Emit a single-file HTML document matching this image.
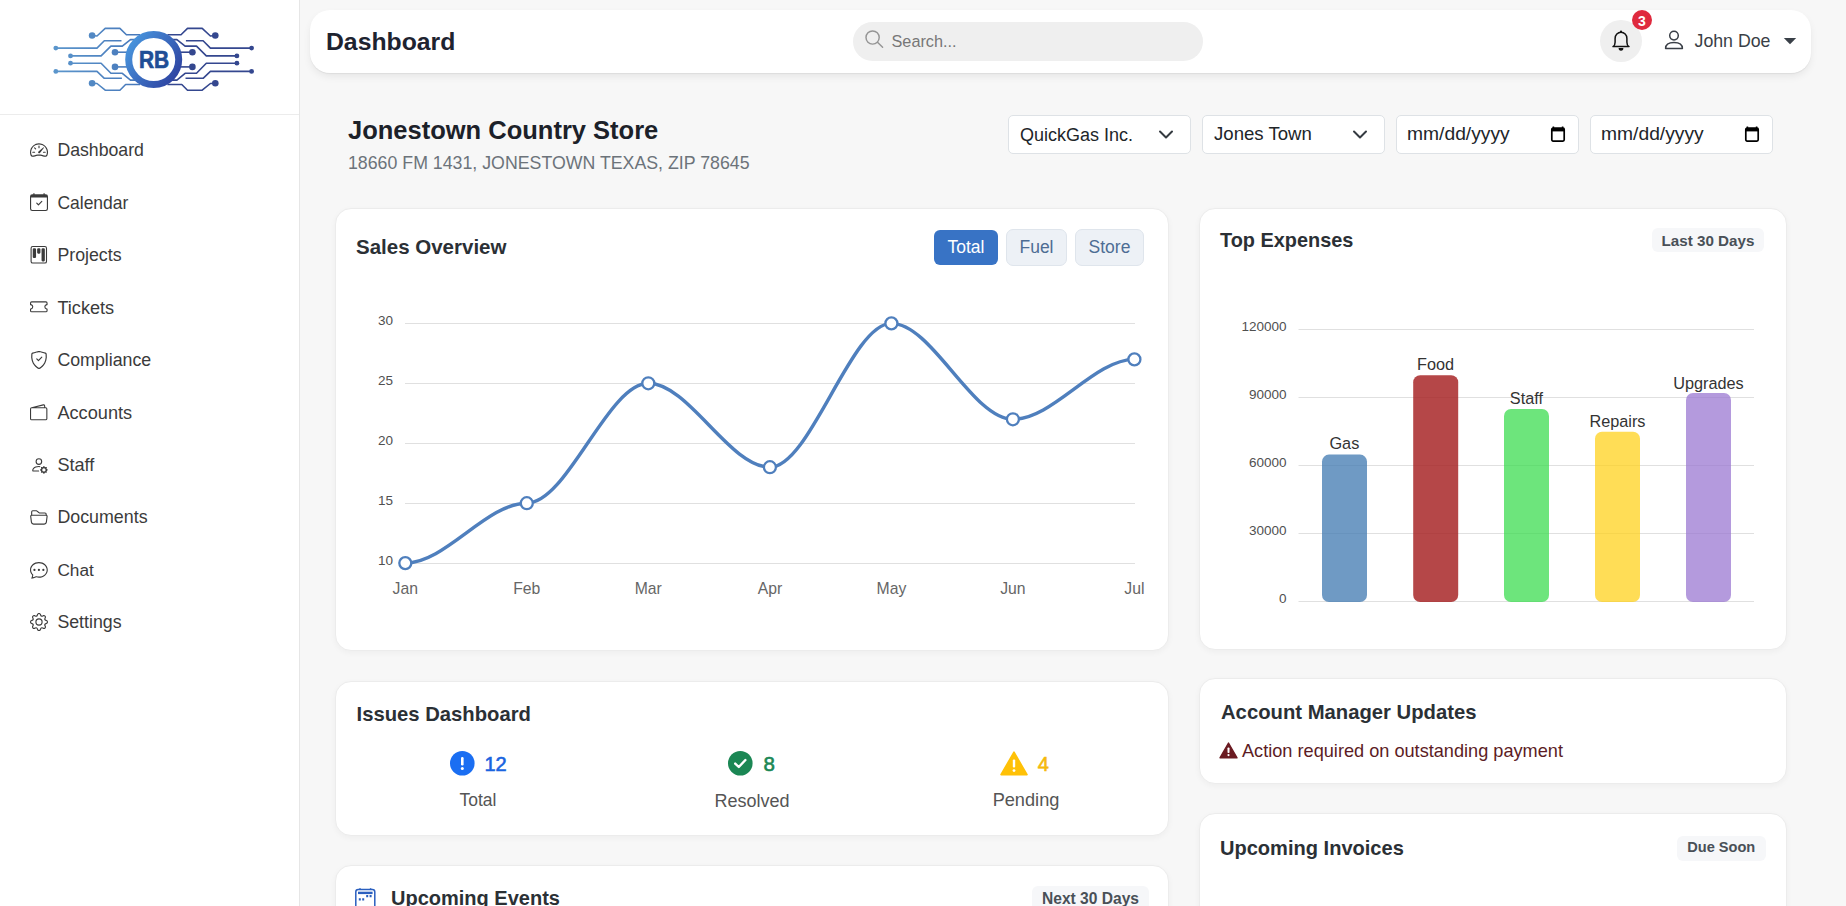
<!DOCTYPE html>
<html><head><meta charset="utf-8">
<style>
*{box-sizing:border-box;margin:0;padding:0}
html,body{width:1846px;height:906px;overflow:hidden}
body{background:#f7f7f7;font-family:"Liberation Sans",sans-serif;position:relative;color:#212529}
.abs{position:absolute}
.t{position:absolute;white-space:nowrap;line-height:1}
#side{position:absolute;left:0;top:0;width:300px;height:906px;background:#fff;border-right:1px solid #e6e6e6}
#side .div{position:absolute;left:0;top:114px;width:299px;height:1px;background:#ececec}
.nav{position:absolute;left:57.4px;font-size:17.5px;color:#3b3b3b}
.nic{position:absolute;left:30px;width:18px;height:18px;overflow:visible}
.card{position:absolute;background:#fff;border:1px solid #ececec;border-radius:16px;box-shadow:0 2px 6px rgba(0,0,0,0.04)}
.h{font-weight:bold;color:#2b3035}
.sel{position:absolute;top:115px;height:38.5px;background:#fff;border:1px solid #dee2e6;border-radius:5px}
.badge{position:absolute;background:#f6f7f9;border-radius:6px}
</style></head><body>

<div id="side">
  <svg class="abs" style="left:0;top:0" width="300" height="114" viewBox="0 0 300 114">
    <defs>
      <linearGradient id="lg" gradientUnits="userSpaceOnUse" x1="53" y1="0" x2="255" y2="0">
        <stop offset="0" stop-color="#5b96cc"/>
        <stop offset="0.45" stop-color="#4676b9"/>
        <stop offset="1" stop-color="#2e3e8c"/>
      </linearGradient>
      <linearGradient id="cg" gradientUnits="userSpaceOnUse" x1="125" y1="40" x2="182" y2="80">
        <stop offset="0" stop-color="#4a9be2"/>
        <stop offset="1" stop-color="#2c3c9c"/>
      </linearGradient>
      <g id="half" fill="none" stroke-width="1.6" stroke-linejoin="round">
        <path d="M92.1,35.5 L97,36 L105.2,28.4 L119.9,28.4 L126.4,34.7 L140,34.7"/>
        <path d="M55.8,48.1 L97,48.1 L104.3,40.8 L121.5,40.8"/>
        <path d="M70.5,55.9 L101.1,55.9 L110.9,46.1 L122.3,46.1 L130.5,39.6 L136,39.6"/>
        <path d="M115,52.2 L130,52.2"/>
        <path d="M115,66.9 L130,66.9"/>
        <path d="M70.5,63.2 L101.1,63.2 L110.9,73.3 L122.3,73.3 L130.5,80.1 L136,80.1"/>
        <path d="M55.8,71.4 L97,71.4 L104.3,78.3 L121.9,78.3"/>
        <path d="M92.1,83.2 L97,83.5 L105.2,90.2 L119.9,90.2 L125.6,84.5 L140,84.5"/>
      </g>
      <g id="dots">
        <circle cx="92.1" cy="35.5" r="3.3"/><circle cx="55.8" cy="48.1" r="2.4"/>
        <circle cx="70.5" cy="55.9" r="2.4"/><circle cx="115" cy="52.2" r="3.3"/>
        <circle cx="115" cy="66.9" r="3.3"/><circle cx="70.5" cy="63.2" r="2.4"/>
        <circle cx="55.8" cy="71.4" r="2.4"/><circle cx="92.1" cy="83.2" r="3.3"/>
      </g>
    </defs>
    <g stroke="url(#lg)" fill="url(#lg)">
      <use href="#half"/>
      <use href="#dots" stroke="none"/>
      <g transform="translate(307.4,0) scale(-1,1)"><g stroke="#34478f" fill="#34478f"><use href="#half"/><use href="#dots" stroke="none"/></g></g>
    </g>
    <circle cx="153.7" cy="59.6" r="25" fill="#fff" stroke="url(#cg)" stroke-width="7"/>
    <text x="154" y="68.3" text-anchor="middle" font-family="Liberation Sans" font-weight="bold" font-size="23.5" fill="#1f4e96" stroke="#1f4e96" stroke-width="0.7" textLength="30.2" lengthAdjust="spacingAndGlyphs">RB</text>
  </svg>
  <div class="div"></div>

  <!-- nav icons -->
<svg class="abs" style="left:30px;top:140.75px" width="18" height="18" viewBox="0 0 16 16" fill="#3b3b3b"><path d="M8 4a.5.5 0 0 1 .5.5V6a.5.5 0 0 1-1 0V4.5A.5.5 0 0 1 8 4M3.732 5.732a.5.5 0 0 1 .707 0l.915.914a.5.5 0 1 1-.708.708l-.914-.915a.5.5 0 0 1 0-.707M2 10a.5.5 0 0 1 .5-.5h1.586a.5.5 0 0 1 0 1H2.5A.5.5 0 0 1 2 10m9.5 0a.5.5 0 0 1 .5-.5h1.5a.5.5 0 0 1 0 1H12a.5.5 0 0 1-.5-.5m.754-4.246a.39.39 0 0 0-.527-.02L7.547 9.31a.91.91 0 1 0 1.302 1.258l3.434-4.297a.39.39 0 0 0-.029-.518z"/><path fill-rule="evenodd" d="M0 10a8 8 0 1 1 15.547 2.661c-.442 1.253-1.845 1.602-2.932 1.25C11.309 13.488 9.475 13 8 13c-1.474 0-3.31.488-4.615.911-1.087.352-2.49.003-2.932-1.25A8 8 0 0 1 0 10m8-7a7 7 0 0 0-6.603 9.329c.203.575.923.876 1.68.63C4.397 12.533 6.358 12 8 12s3.604.532 4.923.96c.757.245 1.477-.056 1.68-.631A7 7 0 0 0 8 3"/></svg>
  <div class="t nav" style="top:141.84px;font-size:17.69px">Dashboard</div>
<svg class="abs" style="left:30px;top:193px" width="18" height="18" viewBox="0 0 16 16" fill="#3b3b3b"><path d="M10.854 7.146a.5.5 0 0 1 0 .708l-3 3a.5.5 0 0 1-.708 0l-1.5-1.5a.5.5 0 1 1 .708-.708L7.5 9.793l2.646-2.647a.5.5 0 0 1 .708 0"/><path d="M3.5 0a.5.5 0 0 1 .5.5V1h8V.5a.5.5 0 0 1 1 0V1h1a2 2 0 0 1 2 2v11a2 2 0 0 1-2 2H2a2 2 0 0 1-2-2V3a2 2 0 0 1 2-2h1V.5a.5.5 0 0 1 .5-.5M1 4v10a1 1 0 0 0 1 1h12a1 1 0 0 0 1-1V4z"/></svg>
  <div class="t nav" style="top:194.51px;font-size:17.49px">Calendar</div>
<svg class="abs" style="left:30px;top:246px" width="17.6" height="17.6" viewBox="0 0 16 16" fill="#3b3b3b"><path d="M13.5 1a1 1 0 0 1 1 1v12a1 1 0 0 1-1 1h-11a1 1 0 0 1-1-1V2a1 1 0 0 1 1-1zm-11-1a2 2 0 0 0-2 2v12a2 2 0 0 0 2 2h11a2 2 0 0 0 2-2V2a2 2 0 0 0-2-2z"/><path d="M6.5 3a1 1 0 0 1 1-1h1a1 1 0 0 1 1 1v3a1 1 0 0 1-1 1h-1a1 1 0 0 1-1-1zm-4 0a1 1 0 0 1 1-1h1a1 1 0 0 1 1 1v7a1 1 0 0 1-1 1h-1a1 1 0 0 1-1-1zm8 0a1 1 0 0 1 1-1h1a1 1 0 0 1 1 1v10a1 1 0 0 1-1 1h-1a1 1 0 0 1-1-1z"/></svg>
  <div class="t nav" style="top:246.76px;font-size:17.78px">Projects</div>
<svg class="abs" style="left:30.3px;top:298px" width="17.6" height="17.6" viewBox="0 0 16 16" fill="#3b3b3b"><path d="M0 4.5A1.5 1.5 0 0 1 1.5 3h13A1.5 1.5 0 0 1 16 4.5V6a.5.5 0 0 1-.5.5 1.5 1.5 0 0 0 0 3 .5.5 0 0 1 .5.5v1.5a1.5 1.5 0 0 1-1.5 1.5h-13A1.5 1.5 0 0 1 0 11.5V10a.5.5 0 0 1 .5-.5 1.5 1.5 0 1 0 0-3A.5.5 0 0 1 0 6zM1.5 4a.5.5 0 0 0-.5.5v1.05a2.5 2.5 0 0 1 0 4.9v1.05a.5.5 0 0 0 .5.5h13a.5.5 0 0 0 .5-.5v-1.05a2.5 2.5 0 0 1 0-4.9V4.5a.5.5 0 0 0-.5-.5z"/></svg>
  <div class="t nav" style="top:298.95px;font-size:18.15px">Tickets</div>
<svg class="abs" style="left:29.8px;top:351.2px" width="18" height="18" viewBox="0 0 16 16" fill="#3b3b3b"><path d="M5.338 1.59a61 61 0 0 0-2.837.856.48.48 0 0 0-.328.39c-.554 4.157.726 7.19 2.253 9.188a10.7 10.7 0 0 0 2.287 2.233c.346.244.652.42.893.533q.18.085.293.118a1 1 0 0 0 .101.025 1 1 0 0 0 .1-.025q.114-.034.294-.118c.24-.113.547-.29.893-.533a10.7 10.7 0 0 0 2.287-2.233c1.527-1.997 2.807-5.031 2.253-9.188a.48.48 0 0 0-.328-.39c-.651-.213-1.75-.56-2.837-.855C9.552 1.29 8.531 1.067 8 1.067c-.53 0-1.552.223-2.662.524zM5.072.56C6.157.265 7.31 0 8 0s1.843.265 2.928.56c1.11.3 2.229.655 2.887.87a1.54 1.54 0 0 1 1.044 1.262c.596 4.477-.787 7.795-2.465 9.99a11.8 11.8 0 0 1-2.517 2.453 7 7 0 0 1-1.048.625c-.28.132-.581.24-.829.24s-.548-.108-.829-.24a7 7 0 0 1-1.048-.625 11.8 11.8 0 0 1-2.517-2.453C1.928 10.487.545 7.169 1.141 2.692A1.54 1.54 0 0 1 2.185 1.43 63 63 0 0 1 5.072.56"/><path d="M10.854 5.146a.5.5 0 0 1 0 .708l-3 3a.5.5 0 0 1-.708 0l-1.5-1.5a.5.5 0 1 1 .708-.708L7.5 7.793l2.646-2.647a.5.5 0 0 1 .708 0"/></svg>
  <div class="t nav" style="top:351.76px;font-size:17.78px">Compliance</div>
<svg class="abs" style="left:30.3px;top:404px" width="17.4" height="17.4" viewBox="0 0 16 16" fill="#3b3b3b"><path d="M12.136.326A1.5 1.5 0 0 1 14 1.78V3h.5A1.5 1.5 0 0 1 16 4.5v9a1.5 1.5 0 0 1-1.5 1.5h-13A1.5 1.5 0 0 1 0 13.5v-9a1.5 1.5 0 0 1 1.432-1.499zM5.562 3H13V1.78a.5.5 0 0 0-.621-.484zM1.5 4a.5.5 0 0 0-.5.5v9a.5.5 0 0 0 .5.5h13a.5.5 0 0 0 .5-.5v-9a.5.5 0 0 0-.5-.5z"/></svg>
  <div class="t nav" style="top:403.92px;font-size:18.18px">Accounts</div>
<svg class="abs" style="left:29.9px;top:455.8px" width="17.8" height="17.8" viewBox="0 0 16 16" fill="#3b3b3b"><path d="M11 5a3 3 0 1 1-6 0 3 3 0 0 1 6 0M8 7a2 2 0 1 0 0-4 2 2 0 0 0 0 4m.256 7a4.5 4.5 0 0 1-.229-1.004H3c.001-.246.154-.986.832-1.664C4.484 10.68 5.711 10 8 10q.39 0 .74.025c.226-.341.496-.65.804-.918Q8.844 9.002 8 9c-5 0-6 3-6 4s1 1 1 1zm3.63-4.54c.18-.613 1.048-.613 1.229 0l.043.148a.64.64 0 0 0 .921.382l.136-.074c.561-.306 1.175.308.87.869l-.075.136a.64.64 0 0 0 .382.92l.149.045c.612.18.612 1.048 0 1.229l-.15.043a.64.64 0 0 0-.38.921l.074.136c.305.561-.309 1.175-.87.87l-.136-.075a.64.64 0 0 0-.92.382l-.045.149c-.18.612-1.048.612-1.229 0l-.043-.15a.64.64 0 0 0-.921-.38l-.136.074c-.561.305-1.175-.309-.87-.87l.075-.136a.64.64 0 0 0-.382-.92l-.148-.045c-.613-.18-.613-1.048 0-1.229l.148-.043a.64.64 0 0 0 .382-.921l-.074-.136c-.306-.561.308-1.175.869-.87l.136.075a.64.64 0 0 0 .92-.382zM14 12.5a1.5 1.5 0 1 0-3 0 1.5 1.5 0 0 0 3 0"/></svg>
  <div class="t nav" style="top:456.46px;font-size:18.14px">Staff</div>
<svg class="abs" style="left:30px;top:508.2px" width="17.8" height="17.8" viewBox="0 0 16 16" fill="#3b3b3b"><path d="M1 3.5A1.5 1.5 0 0 1 2.5 2h2.764c.958 0 1.76.56 2.311 1.184C7.985 3.648 8.48 4 9 4h4.5A1.5 1.5 0 0 1 15 5.5v.64c.57.265.94.876.856 1.546l-.64 5.124A2.5 2.5 0 0 1 12.733 15H3.266a2.5 2.5 0 0 1-2.481-2.19l-.64-5.124A1.5 1.5 0 0 1 1 6.14zM2 6h12v-.5a.5.5 0 0 0-.5-.5H9c-.964 0-1.71-.629-2.174-1.154C6.374 3.334 5.82 3 5.264 3H2.5a.5.5 0 0 0-.5.5zm-.367 1a.5.5 0 0 0-.496.562l.64 5.124A1.5 1.5 0 0 0 3.266 14h9.468a1.5 1.5 0 0 0 1.489-1.314l.64-5.124A.5.5 0 0 0 14.367 7z"/></svg>
  <div class="t nav" style="top:509.22px;font-size:17.83px">Documents</div>
<svg class="abs" style="left:30px;top:560.9px" width="17.8" height="17.8" viewBox="0 0 16 16" fill="#3b3b3b"><path d="M5 8a1 1 0 1 1-2 0 1 1 0 0 1 2 0m4 0a1 1 0 1 1-2 0 1 1 0 0 1 2 0m3 1a1 1 0 1 0 0-2 1 1 0 0 0 0 2"/><path d="m2.165 15.803.02-.004c1.83-.363 2.948-.842 3.468-1.105A9 9 0 0 0 8 15c4.418 0 8-3.134 8-7s-3.582-7-8-7-8 3.134-8 7c0 1.76.743 3.37 1.97 4.6a10.4 10.4 0 0 1-.524 2.318l-.003.011a11 11 0 0 1-.244.637c-.079.186.074.394.273.362a22 22 0 0 0 .693-.125m.8-3.108a1 1 0 0 0-.287-.801C1.618 10.83 1 9.468 1 8c0-3.192 3.004-6 7-6s7 2.808 7 6-3.004 6-7 6a8 8 0 0 1-2.088-.272 1 1 0 0 0-.711.074c-.387.196-1.24.57-2.634.893a11 11 0 0 0 .398-2"/></svg>
  <div class="t nav" style="top:562.21px;font-size:17.25px">Chat</div>
<svg class="abs" style="left:30px;top:612.5px" width="18" height="18" viewBox="0 0 16 16" fill="#3b3b3b"><path d="M8 4.754a3.246 3.246 0 1 0 0 6.492 3.246 3.246 0 0 0 0-6.492M5.754 8a2.246 2.246 0 1 1 4.492 0 2.246 2.246 0 0 1-4.492 0"/><path d="M9.796 1.343c-.527-1.79-3.065-1.79-3.592 0l-.094.319a.873.873 0 0 1-1.255.52l-.292-.16c-1.64-.892-3.433.902-2.54 2.541l.159.292a.873.873 0 0 1-.52 1.255l-.319.094c-1.79.527-1.79 3.065 0 3.592l.319.094a.873.873 0 0 1 .52 1.255l-.16.292c-.892 1.64.901 3.434 2.541 2.54l.292-.159a.873.873 0 0 1 1.255.52l.094.319c.527 1.79 3.065 1.79 3.592 0l.094-.319a.873.873 0 0 1 1.255-.52l.292.16c1.64.893 3.434-.902 2.54-2.541l-.159-.292a.873.873 0 0 1 .52-1.255l.319-.094c1.79-.527 1.790-3.065 0-3.592l-.319-.094a.873.873 0 0 1-.52-1.255l.16-.292c.893-1.64-.902-3.433-2.541-2.54l-.292.159a.873.873 0 0 1-1.255-.52zm-2.633.283c.246-.835 1.428-.835 1.674 0l.094.319a1.873 1.873 0 0 0 2.693 1.115l.291-.16c.764-.415 1.6.42 1.184 1.185l-.159.292a1.873 1.873 0 0 0 1.116 2.692l.318.094c.835.246.835 1.428 0 1.674l-.319.094a1.873 1.873 0 0 0-1.115 2.693l.16.291c.415.764-.42 1.6-1.185 1.184l-.291-.159a1.873 1.873 0 0 0-2.693 1.116l-.094.318c-.246.835-1.428.835-1.674 0l-.094-.319a1.873 1.873 0 0 0-2.692-1.115l-.292.16c-.764.415-1.6-.42-1.184-1.185l.159-.291A1.873 1.873 0 0 0 1.945 8.93l-.319-.094c-.835-.246-.835-1.428 0-1.674l.319-.094A1.873 1.873 0 0 0 3.06 4.377l-.16-.292c-.415-.764.42-1.6 1.185-1.184l.292.159a1.873 1.873 0 0 0 2.692-1.115z"/></svg>
  <div class="t nav" style="top:614.26px;font-size:17.78px">Settings</div>
</div>

<!-- header -->
<div class="card" style="left:310px;top:10px;width:1501px;height:63px;border:none;border-radius:20px;box-shadow:0 1px 1px rgba(0,0,0,0.05),0 4px 8px -1px rgba(0,0,0,0.08)"></div>
<div class="t" style="left:326px;top:30px;font-size:24.75px;font-weight:bold;color:#1e2330">Dashboard</div>
<div class="abs" style="left:853px;top:22px;width:350px;height:38.5px;border-radius:20px;background:#efefef"></div>
<svg class="abs" style="left:864px;top:29px" width="22" height="22" viewBox="0 0 22 22" fill="none" stroke="#959595" stroke-width="1.45" stroke-linecap="round">
  <circle cx="8.6" cy="8.5" r="6.6"/><path d="M13.5,13.3 L18.6,18.3"/>
</svg>
<div class="t" style="left:891.5px;top:33px;font-size:16.25px;color:#777">Search...</div>

<div class="abs" style="left:1600px;top:20px;width:42px;height:42px;border-radius:50%;background:#efefef"></div>
<svg class="abs" style="left:1611px;top:29px" width="20" height="24" viewBox="0 0 20 24" fill="none" stroke="#111" stroke-width="1.5" stroke-linejoin="round">
  <path d="M2,17.6 H18 Q15.9,16.4 15.9,13.2 V9.4 A5.9,6.1 0 0 0 4.1,9.4 V13.2 Q4.1,16.4 2,17.6Z"/>
  <circle cx="10" cy="2.7" r="1.1" fill="#111" stroke="none"/>
  <path d="M7.6,19.1 H12.4 A2.4,2.6 0 0 1 7.6,19.1Z" fill="#111" stroke="none"/>
</svg>
<div class="abs" style="left:1632px;top:10px;width:20px;height:20px;border-radius:50%;background:#df2a3e"></div>
<div class="t" style="left:1632px;top:13.5px;width:20px;text-align:center;font-size:14px;font-weight:bold;color:#fff">3</div>
<svg class="abs" style="left:1664px;top:30px" width="20" height="20" viewBox="0 0 20 20" fill="none" stroke="#3a3f47" stroke-width="1.5">
  <circle cx="10" cy="5.6" r="4.3"/>
  <path d="M1.6,18.4 Q1.6,12.4 10,12.4 Q18.4,12.4 18.4,18.4Z" stroke-linejoin="round"/>
</svg>
<div class="t" style="left:1694.5px;top:33px;font-size:17.75px;color:#3a3f47">John Doe</div>
<svg class="abs" style="left:1783px;top:37px" width="14" height="8" viewBox="0 0 14 8"><path d="M0.8,1 H13.2 L7,7.2Z" fill="#3a4048"/></svg>

<!-- store header -->
<div class="t" style="left:348px;top:117.5px;font-size:25.5px;font-weight:bold;color:#1c2129">Jonestown Country Store</div>
<div class="t" style="left:348px;top:154.5px;font-size:17.75px;color:#6c737a">18660 FM 1431, JONESTOWN TEXAS, ZIP 78645</div>

<div class="sel" style="left:1007.8px;width:183px"></div>
<div class="t" style="left:1020px;top:125.5px;font-size:18px;color:#212529">QuickGas Inc.</div>
<svg class="abs" style="left:1158px;top:129px" width="16" height="11" viewBox="0 0 16 11" fill="none" stroke="#343a40" stroke-width="2" stroke-linecap="round" stroke-linejoin="round"><path d="M2,2.5 L8,8.5 L14,2.5"/></svg>
<div class="sel" style="left:1201.8px;width:183px"></div>
<div class="t" style="left:1214px;top:125px;font-size:18.6px;color:#212529">Jones Town</div>
<svg class="abs" style="left:1352px;top:129px" width="16" height="11" viewBox="0 0 16 11" fill="none" stroke="#343a40" stroke-width="2" stroke-linecap="round" stroke-linejoin="round"><path d="M2,2.5 L8,8.5 L14,2.5"/></svg>
<div class="sel" style="left:1395.8px;width:183px"></div>
<div class="t" style="left:1407px;top:124.2px;font-size:19.25px;color:#212529">mm/dd/yyyy</div>
<svg class="abs" style="left:1549.5px;top:126.3px" width="16" height="17" viewBox="0 0 16 17"><path d="M3.4,0.6 V2.4 M12.6,0.6 V2.4" stroke="#000" stroke-width="1.6"/><rect x="1.8" y="2.1" width="12.4" height="13" rx="1.3" fill="none" stroke="#000" stroke-width="1.7"/><rect x="1.8" y="2.1" width="12.4" height="3.3" fill="#000"/></svg>
<div class="sel" style="left:1589.8px;width:183px"></div>
<div class="t" style="left:1601px;top:124.2px;font-size:19.25px;color:#212529">mm/dd/yyyy</div>
<svg class="abs" style="left:1743.5px;top:126.3px" width="16" height="17" viewBox="0 0 16 17"><path d="M3.4,0.6 V2.4 M12.6,0.6 V2.4" stroke="#000" stroke-width="1.6"/><rect x="1.8" y="2.1" width="12.4" height="13" rx="1.3" fill="none" stroke="#000" stroke-width="1.7"/><rect x="1.8" y="2.1" width="12.4" height="3.3" fill="#000"/></svg>

<!-- Sales overview -->
<div class="card" style="left:334.5px;top:207.5px;width:834px;height:443px"></div>
<div class="t h" style="left:356px;top:237px;font-size:20.5px">Sales Overview</div>
<div class="abs" style="left:934px;top:230px;width:64px;height:35px;border-radius:6px;background:#3873c5"></div>
<div class="t" style="left:934px;top:238.5px;width:64px;text-align:center;font-size:17.5px;color:#fff">Total</div>
<div class="abs" style="left:1006px;top:229px;width:61px;height:37px;border-radius:7px;background:#edf1f6;border:1px solid #dfe5ec"></div>
<div class="t" style="left:1006px;top:238.5px;width:61px;text-align:center;font-size:17.5px;color:#4d6d94">Fuel</div>
<div class="abs" style="left:1075px;top:229px;width:69px;height:37px;border-radius:7px;background:#edf1f6;border:1px solid #dfe5ec"></div>
<div class="t" style="left:1075px;top:238.5px;width:69px;text-align:center;font-size:17.5px;color:#4d6d94">Store</div>

<svg class="abs" style="left:0;top:0" width="1846" height="906" viewBox="0 0 1846 906">
  <g stroke="#e0e0e0" stroke-width="1">
    <path d="M405,323.5 H1135 M405,383.5 H1135 M405,443.5 H1135 M405,503.5 H1135 M405,563.5 H1135"/>
  </g>
  <g font-family="Liberation Sans" font-size="13.5" fill="#505050" text-anchor="end">
    <text x="393" y="325">30</text><text x="393" y="385">25</text><text x="393" y="445">20</text><text x="393" y="505">15</text><text x="393" y="565">10</text>
  </g>
  <g font-family="Liberation Sans" font-size="15.75" fill="#666" text-anchor="middle">
    <text x="405.3" y="593.6">Jan</text><text x="526.8" y="593.6">Feb</text><text x="648.3" y="593.6">Mar</text><text x="769.9" y="593.6">Apr</text><text x="891.4" y="593.6">May</text><text x="1012.9" y="593.6">Jun</text><text x="1134.4" y="593.6">Jul</text>
  </g>
  <path d="M405.3,563.1 C445.8,563.1 486.3,503.2 526.8,503.2 C567.3,503.2 607.8,383.3 648.3,383.3 C688.8,383.3 729.4,467.2 769.9,467.2 C810.4,467.2 850.9,323.4 891.4,323.4 C931.9,323.4 972.4,419.3 1012.9,419.3 C1053.4,419.3 1093.9,359.4 1134.4,359.4" fill="none" stroke="#4f7fbd" stroke-width="3.4"/>
  <g fill="#fff" stroke="#4f7fbd" stroke-width="2.3">
    <circle cx="405.3" cy="563.1" r="6"/><circle cx="526.8" cy="503.2" r="6"/><circle cx="648.3" cy="383.3" r="6"/><circle cx="769.9" cy="467.2" r="6"/><circle cx="891.4" cy="323.4" r="6"/><circle cx="1012.9" cy="419.3" r="6"/><circle cx="1134.4" cy="359.4" r="6"/>
  </g>
</svg>

<!-- Top expenses -->
<div class="card" style="left:1198.5px;top:207.5px;width:588px;height:442px"></div>
<div class="t h" style="left:1220px;top:230.5px;font-size:19.9px">Top Expenses</div>
<div class="badge" style="left:1652px;top:228px;width:112px;height:24px"></div>
<div class="t" style="left:1652px;top:233px;width:112px;text-align:center;font-size:15.2px;font-weight:bold;color:#495057">Last 30 Days</div>

<svg class="abs" style="left:0;top:0" width="1846" height="906" viewBox="0 0 1846 906">
  <g stroke="#e0e0e0" stroke-width="1">
    <path d="M1298.5,329.5 H1754 M1298.5,397.5 H1754 M1298.5,465.5 H1754 M1298.5,533.5 H1754 M1298.5,601.5 H1754"/>
  </g>
  <g font-family="Liberation Sans" font-size="13.5" fill="#505050" text-anchor="end">
    <text x="1286.5" y="331">120000</text><text x="1286.5" y="399">90000</text><text x="1286.5" y="467">60000</text><text x="1286.5" y="535">30000</text><text x="1286.5" y="603">0</text>
  </g>
  <g>
    <rect x="1322" y="454.6" width="45" height="147.4" rx="7" fill="rgba(70,125,180,0.78)"/>
    <rect x="1413.2" y="375.2" width="45" height="226.8" rx="7" fill="rgba(165,30,32,0.82)"/>
    <rect x="1504" y="409" width="45" height="193" rx="7" fill="rgba(60,220,80,0.75)"/>
    <rect x="1595" y="431.7" width="45" height="170.3" rx="7" fill="rgba(255,210,30,0.75)"/>
    <rect x="1686" y="392.9" width="45" height="209.1" rx="7" fill="rgba(155,120,210,0.75)"/>
  </g>
  <g font-family="Liberation Sans" font-size="16.25" fill="#333" text-anchor="middle">
    <text x="1344.4" y="449.3">Gas</text><text x="1435.6" y="369.9">Food</text><text x="1526.4" y="403.6">Staff</text><text x="1617.5" y="426.5">Repairs</text><text x="1708.4" y="388.5">Upgrades</text>
  </g>
</svg>

<!-- Issues -->
<div class="card" style="left:334.5px;top:680.5px;width:834px;height:155.5px"></div>
<div class="t h" style="left:356.5px;top:703.5px;font-size:20.25px">Issues Dashboard</div>
<svg class="abs" style="left:450px;top:751px" width="25" height="25" viewBox="0 0 25 25"><circle cx="12.3" cy="12.3" r="12.3" fill="#1a6ef2"/><rect x="11" y="6" width="2.6" height="8.5" rx="1.2" fill="#fff"/><circle cx="12.3" cy="17.6" r="1.5" fill="#fff"/></svg>
<div class="t" style="left:484.5px;top:754.2px;font-size:20px;color:#1a64e0;-webkit-text-stroke:0.6px #1a64e0">12</div>
<div class="t" style="left:428px;top:792px;width:100px;text-align:center;font-size:17.5px;color:#555">Total</div>

<svg class="abs" style="left:728px;top:751px" width="25" height="25" viewBox="0 0 25 25"><circle cx="12.3" cy="12.3" r="12.3" fill="#1b8754"/><path d="M7.2,12.6 L10.8,16 L17.4,9" fill="none" stroke="#fff" stroke-width="2.4" stroke-linecap="round" stroke-linejoin="round"/></svg>
<div class="t" style="left:763.4px;top:753.8px;font-size:20.5px;color:#1b8754;-webkit-text-stroke:0.6px #1b8754">8</div>
<div class="t" style="left:692px;top:791.5px;width:120px;text-align:center;font-size:18px;color:#555">Resolved</div>

<svg class="abs" style="left:1000px;top:751px" width="28" height="25" viewBox="0 0 28 25"><path d="M14,1.2 L27,23.6 H1Z" fill="#ffc107" stroke="#ffc107" stroke-width="1.6" stroke-linejoin="round"/><rect x="12.8" y="8.4" width="2.4" height="8" rx="1" fill="#fff"/><circle cx="14" cy="19.6" r="1.4" fill="#fff"/></svg>
<div class="t" style="left:1037.8px;top:754.2px;font-size:20px;color:#f5b90b;-webkit-text-stroke:0.6px #f5b90b">4</div>
<div class="t" style="left:966px;top:791.3px;width:120px;text-align:center;font-size:18.2px;color:#555">Pending</div>

<!-- Upcoming events -->
<div class="card" style="left:334.5px;top:864.6px;width:834px;height:200px"></div>
<svg class="abs" style="left:355px;top:888px" width="21" height="22" viewBox="0 0 21 22" fill="none" stroke="#2a5fbf" stroke-width="1.5"><rect x="0.8" y="1.6" width="19" height="19" rx="2.4"/><path d="M3,4.9 H17.6" stroke-width="2.4"/><path d="M5,0.3 V2 M15.6,0.3 V2"/><path d="M11.2,8.2 H13.2 M14.6,8.2 H16.6 M3.8,11.4 H5.8 M7.2,11.4 H9.2" stroke-width="2.2"/></svg>
<div class="t h" style="left:391px;top:888px;font-size:20px">Upcoming Events</div>
<div class="badge" style="left:1032px;top:886px;width:117px;height:26px"></div>
<div class="t" style="left:1032px;top:890.5px;width:117px;text-align:center;font-size:15.6px;font-weight:bold;color:#495057">Next 30 Days</div>

<!-- Account Manager -->
<div class="card" style="left:1198.5px;top:678.2px;width:588px;height:106.3px"></div>
<div class="t h" style="left:1221px;top:701.5px;font-size:20.25px">Account Manager Updates</div>
<svg class="abs" style="left:1219px;top:742px" width="19" height="17" viewBox="0 0 19 17"><path d="M9.5,1 L18,15.8 H1Z" fill="#6b1b22" stroke="#6b1b22" stroke-width="1.4" stroke-linejoin="round"/><rect x="8.5" y="5.4" width="2" height="5.6" rx="0.8" fill="#fff"/><circle cx="9.5" cy="13.1" r="1.1" fill="#fff"/></svg>
<div class="t" style="left:1242px;top:741.5px;font-size:18.16px;color:#5c1c24">Action required on outstanding payment</div>

<!-- Upcoming invoices -->
<div class="card" style="left:1198.5px;top:813.4px;width:588px;height:200px"></div>
<div class="t h" style="left:1220px;top:838px;font-size:20.06px">Upcoming Invoices</div>
<div class="badge" style="left:1677px;top:835.5px;width:88.5px;height:25px"></div>
<div class="t" style="left:1677px;top:840px;width:88.5px;text-align:center;font-size:14.6px;font-weight:bold;color:#495057">Due Soon</div>

</body></html>
